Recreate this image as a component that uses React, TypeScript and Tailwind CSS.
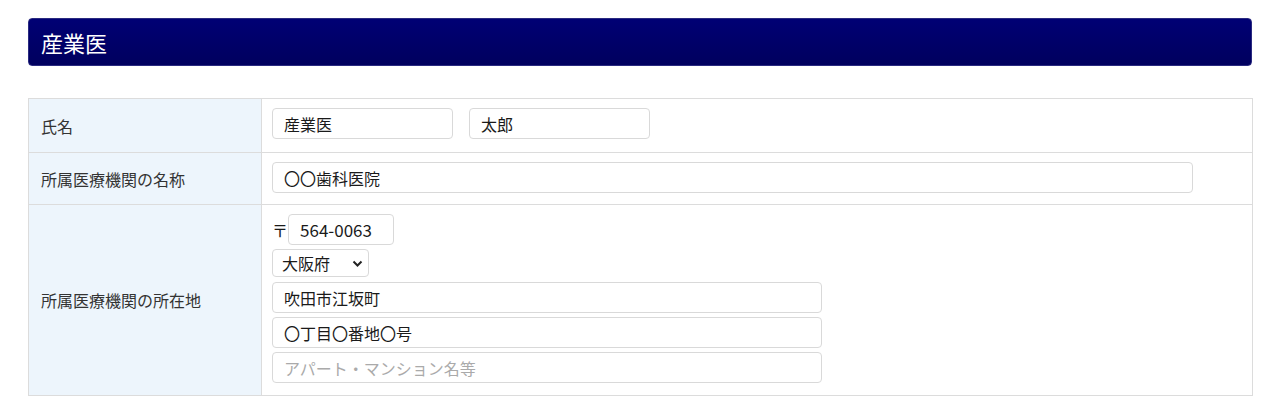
import React from 'react';

const font = "font-['Noto_Sans_CJK_JP','Noto_Sans',sans-serif]";

const inputClass =
  'h-[31px] rounded-[4px] border border-[#d9d9d9] bg-white px-[11px] text-[16px] text-[#1a1a1a] outline-none placeholder:text-[#aaa]';

const Row: React.FC<{ label: string; children: React.ReactNode; pb?: string }> = ({ label, children, pb = 'pb-[12px]' }) => (
  <tr>
    <th className="w-[233px] border border-[#dcdcdc] bg-[#edf5fc] pl-[12px] text-left align-middle text-[16px] font-normal text-[#333]">
      {label}
    </th>
    <td className={`border border-[#dcdcdc] bg-white pl-[10px] pt-[9px] ${pb} align-top`}>{children}</td>
  </tr>
);

export default function App() {
  return (
    <div className={`${font} min-h-[412px] bg-white px-[28px] pt-[18px]`}>
      <div className="flex h-[48px] w-[1224px] items-center rounded-[4px] border border-[#2a2a80] bg-gradient-to-b from-[#000074] to-[#00005e] pl-[12px] text-[22px] text-white">
        産業医
      </div>

      <table className="mt-[32px] w-[1225px] border-collapse">
        <tbody>
          <Row label="氏名" pb="pb-[13px]">
            <div className="flex gap-[16px]">
              <input className={`${inputClass} w-[181px]`} defaultValue="産業医" />
              <input className={`${inputClass} w-[181px]`} defaultValue="太郎" />
            </div>
          </Row>
          <Row label="所属医療機関の名称" pb="pb-[11px]">
            <input className={`${inputClass} block h-[30px] w-[921px]`} defaultValue="〇〇歯科医院" />
          </Row>
          <Row label="所属医療機関の所在地" pb="pb-[12px]">
            <div className="flex flex-col">
              <div className="flex items-center">
                <span className="text-[16px] text-[#1a1a1a]">〒</span>
                <input className={`${inputClass} w-[106px] text-[17px]`} defaultValue="564-0063" />
              </div>
              <div className="relative mt-[4px] w-[97px]">
                <select className="block h-[28px] w-[97px] appearance-none rounded-[4px] border border-[#d9d9d9] bg-white pl-[9px] text-[16px] text-[#1a1a1a] outline-none">
                  <option>大阪府</option>
                </select>
                <svg
                  className="pointer-events-none absolute right-[6px] top-[11px]"
                  width="11"
                  height="7"
                  viewBox="0 0 11 7"
                  fill="none"
                  stroke="#222"
                  strokeWidth="2"
                >
                  <path d="M1.5 1.5 L5.5 5.5 L9.5 1.5" />
                </svg>
              </div>
              <div className="mt-[5px] flex flex-col gap-[4px]">
                <input className={`${inputClass} w-[550px]`} defaultValue="吹田市江坂町" />
                <input className={`${inputClass} w-[550px]`} defaultValue="〇丁目〇番地〇号" />
                <input className={`${inputClass} w-[550px]`} placeholder="アパート・マンション名等" />
              </div>
            </div>
          </Row>
        </tbody>
      </table>
    </div>
  );
}
